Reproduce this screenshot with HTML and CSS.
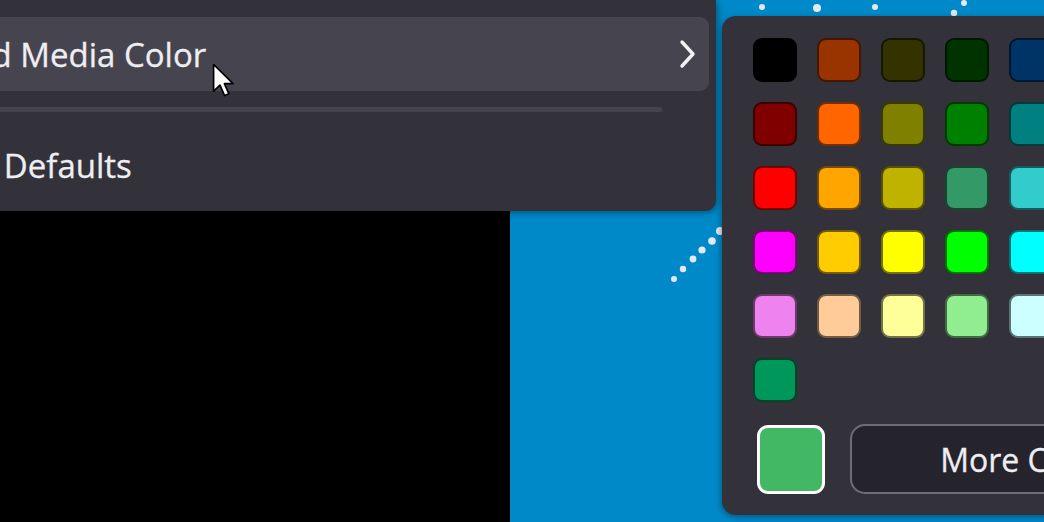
FILE: index.html
```html
<!DOCTYPE html>
<html lang="en">
<head>
<meta charset="utf-8">
<title>Media Color</title>
<link rel="stylesheet" href="styles.css">
</head>
<body>
<div class="screen">
  <div class="video"></div>
  <div class="canvas"></div>
  <svg class="dots" width="1044" height="522" viewBox="0 0 1044 522" aria-hidden="true">
    <g fill="#e4e8ef">
      <circle cx="762" cy="7" r="3"/>
      <circle cx="817" cy="8" r="4"/>
      <circle cx="875" cy="7" r="3"/>
      <circle cx="964" cy="3" r="3"/>
      <circle cx="954" cy="13" r="3.2"/>
      <circle cx="674" cy="279" r="3"/>
      <circle cx="683" cy="269" r="3.2"/>
      <circle cx="693" cy="259" r="3.4"/>
      <circle cx="702" cy="250" r="3.6"/>
      <circle cx="712" cy="241" r="3.8"/>
      <circle cx="720" cy="231" r="4"/>
    </g>
  </svg>

  <div class="menu">
    <div class="menu-item is-hover">
      <span class="label">Background Media Color</span>
      <svg class="chevron" width="20" height="30" viewBox="0 0 20 30" aria-hidden="true">
        <path d="M4 3 L15 15 L4 27" fill="none" stroke="#f2f2f5" stroke-width="3.4" stroke-linecap="round" stroke-linejoin="round"/>
      </svg>
    </div>
    <div class="menu-sep"></div>
    <div class="menu-item">
      <span class="label label-b">Restore Defaults</span>
    </div>
  </div>

  <div class="picker">
    <div class="swatches">
      <div class="swatch" style="background:#000000"></div>
      <div class="swatch" style="background:#993300"></div>
      <div class="swatch" style="background:#333300"></div>
      <div class="swatch" style="background:#003300"></div>
      <div class="swatch" style="background:#003366"></div>
      <div class="swatch" style="background:#000080"></div>
      <div class="swatch" style="background:#333399"></div>
      <div class="swatch" style="background:#333333"></div>

      <div class="swatch" style="background:#800000"></div>
      <div class="swatch" style="background:#ff6600"></div>
      <div class="swatch" style="background:#808000"></div>
      <div class="swatch" style="background:#008000"></div>
      <div class="swatch" style="background:#008080"></div>
      <div class="swatch" style="background:#0000ff"></div>
      <div class="swatch" style="background:#666699"></div>
      <div class="swatch" style="background:#808080"></div>

      <div class="swatch" style="background:#ff0000"></div>
      <div class="swatch" style="background:#ffa500"></div>
      <div class="swatch" style="background:#bfb300"></div>
      <div class="swatch" style="background:#339966"></div>
      <div class="swatch" style="background:#33cccc"></div>
      <div class="swatch" style="background:#3366ff"></div>
      <div class="swatch" style="background:#800080"></div>
      <div class="swatch" style="background:#969696"></div>

      <div class="swatch" style="background:#ff00ff"></div>
      <div class="swatch" style="background:#ffcc00"></div>
      <div class="swatch" style="background:#ffff00"></div>
      <div class="swatch" style="background:#00ff00"></div>
      <div class="swatch" style="background:#00ffff"></div>
      <div class="swatch" style="background:#00ccff"></div>
      <div class="swatch" style="background:#993366"></div>
      <div class="swatch" style="background:#c0c0c0"></div>

      <div class="swatch" style="background:#ee82ee"></div>
      <div class="swatch" style="background:#ffcc99"></div>
      <div class="swatch" style="background:#ffff99"></div>
      <div class="swatch" style="background:#90ee90"></div>
      <div class="swatch" style="background:#ccffff"></div>
      <div class="swatch" style="background:#99ccff"></div>
      <div class="swatch" style="background:#cc99ff"></div>
      <div class="swatch" style="background:#ffffff"></div>

      <div class="swatch" style="background:#00975a"></div>
    </div>
    <div class="picker-foot">
      <div class="current-color"></div>
      <button class="more-btn" type="button">More Colors...</button>
    </div>
  </div>

  <svg class="cursor" width="26" height="38" viewBox="0 0 17 25" aria-hidden="true">
    <path d="M1 1 L1 18.5 L5.2 14.6 L8.2 21.4 L11 20.2 L8.1 13.6 L13.8 13.6 Z" fill="#ffffff" stroke="#000000" stroke-width="1.1" stroke-linejoin="round"/>
  </svg>
</div>
</body>
</html>
```

FILE: styles.css
```css
* { box-sizing: border-box; }

html, body {
  margin: 0;
  padding: 0;
  background: #000;
}

body {
  width: 1044px;
  height: 522px;
  overflow: hidden;
  font-family: "Open Sans", "Noto Sans", "Liberation Sans", sans-serif;
}

.screen {
  position: relative;
  display: flex;
  width: 1044px;
  height: 522px;
  overflow: hidden;
}

.video {
  width: 510px;
  background: #000;
}

.canvas {
  flex: 1;
  background: #0089c9;
}

.dots {
  position: absolute;
  left: 0;
  top: 0;
}

/* Context menu */
.menu {
  position: absolute;
  left: -200px;
  top: 0;
  width: 916px;
  padding: 17px 0 9px 0;
  background: #33323b;
  border-bottom-right-radius: 11px;
  box-shadow: 2px 2px 6px rgba(0, 0, 0, 0.35);
  color: #eeeef2;
}

.menu-item {
  display: flex;
  align-items: center;
  justify-content: space-between;
  height: 74px;
  margin-right: 7px;
  padding: 0 11px 0 27px;
  border-radius: 9px;
  font-size: 33px;
  white-space: nowrap;
}

.label {
  -webkit-text-stroke: 0.3px currentColor;
}

.menu-item.is-hover {
  background: #46454f;
}

.label-b {
  padding-left: 50px;
}

.chevron {
  display: block;
}

.menu-sep {
  height: 5px;
  margin: 16px 54px 16px 0;
  background: #45444e;
  border-radius: 2px;
}

/* Colour picker */
.picker {
  position: absolute;
  left: 722px;
  top: 16px;
  width: 554px;
  height: 499px;
  padding: 22px 31px;
  background: #33323b;
  border-radius: 14px;
  box-shadow: -1px 2px 6px rgba(0, 0, 0, 0.35);
}

.swatches {
  display: grid;
  grid-template-columns: repeat(8, 44px);
  grid-auto-rows: 44px;
  gap: 20px;
}

.swatch {
  width: 44px;
  height: 44px;
  border: 2px solid rgba(0, 0, 0, 0.55);
  border-radius: 9px;
}

.picker-foot {
  display: flex;
  align-items: center;
  gap: 25px;
  margin-top: 22px;
  padding-left: 4px;
}

.current-color {
  width: 68px;
  height: 69px;
  border: 3px solid #ffffff;
  border-radius: 11px;
  background: #43b864;
}

.more-btn {
  width: 388px;
  height: 70px;
  border: 2px solid #6e6d76;
  border-radius: 15px;
  background: #25242c;
  color: #eeeef2;
  font-family: "Open Sans", "Noto Sans", "Liberation Sans", sans-serif;
  font-size: 32px;
  padding: 0;
  -webkit-text-stroke: 0.3px currentColor;
}

.cursor {
  position: absolute;
  left: 212px;
  top: 63px;
}
```
